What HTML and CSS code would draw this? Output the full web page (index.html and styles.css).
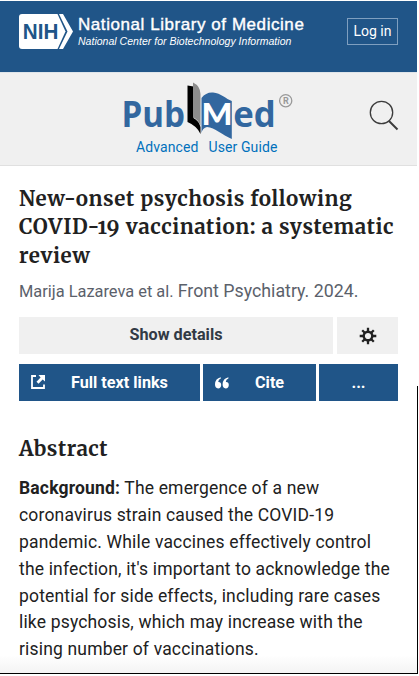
FILE: index.html
```html
<!DOCTYPE html>
<html lang="en">
<head>
    <meta charset="UTF-8">
    <meta name="viewport" content="width=device-width, initial-scale=1.0">
    <title>New-onset psychosis following COVID-19 vaccination - PubMed</title>
    <link rel="stylesheet" href="styles.css">
</head>
<body>
    <div class="page">
        <header class="ncbi-header">
            <a class="ncbi-logo" href="#">
                <svg class="nih-mark" width="54" height="35" viewBox="0 0 54 35">
                    <path d="M3 0H38.5L46.5 17.5L38.5 35H3Q0 35 0 32V3Q0 0 3 0Z" fill="#fff"/>
                    <path d="M40 0H44L54 17.5L44 35H40L48.5 17.5Z" fill="#fff"/>
                    <text class="nih-text" x="3.8" y="25" textLength="35.5" lengthAdjust="spacingAndGlyphs">NIH</text>
                </svg>
                <span class="ncbi-names">
                    <span class="nlm">National Library of Medicine</span>
                    <span class="ncbi">National Center for Biotechnology Information</span>
                </span>
            </a>
            <button class="login">Log in</button>
        </header>

        <div class="search-bar">
            <div class="brand">
                <svg class="pubmed-logo" width="172" height="58" viewBox="0 0 172 58">
                    <text class="pm-text" x="-1.500" y="45" textLength="63.500" lengthAdjust="spacingAndGlyphs">Pub</text>
                    <path d="M64.500 3.500L70.500 4.500V36Q76 39 77.500 45V52Q74 44 64.500 40Z" fill="#000"/>
                    <path d="M70 0.500Q77.300 4 77.500 12V44Q75.500 38 70 35Z" fill="#8c8c8c"/>
                    <path d="M78.500 16Q83 10 90 10.500C98 11 103 17 108.800 19V57C99 53 92 45.500 84 45Q79.500 46 78.500 51Z" fill="#32679f"/>
                    <text class="pm-text pm-white" x="78.500" y="42.500" textLength="31" lengthAdjust="spacingAndGlyphs">M</text>
                    <text class="pm-text" x="110.300" y="45" textLength="42.500" lengthAdjust="spacingAndGlyphs">ed</text>
                    <circle cx="162.700" cy="18.700" r="6.100" fill="none" stroke="#999" stroke-width="1.300"/>
                    <text class="reg" x="162.900" y="22" text-anchor="middle">R</text>
                </svg>
                <nav class="brand-links">
                    <a href="#">Advanced</a>
                    <a href="#">User Guide</a>
                </nav>
            </div>
            <button class="search-button" aria-label="Search">
                <svg width="30" height="31" viewBox="0 0 30 31" fill="none" stroke="#3c3c3c">
                    <circle cx="12.500" cy="12.500" r="11.200" stroke-width="1.300"/>
                    <path d="M20 21L28.500 29.500" stroke-width="2"/>
                </svg>
            </button>
        </div>

        <main class="article">
            <h1 class="title">
                New-onset psychosis following<br>
                COVID-19 vaccination: a systematic<br>
                review
            </h1>
            <p class="citation"><span class="authors">Marija Lazareva et al.</span> <span class="journal">Front Psychiatry. 2024.</span></p>

            <div class="details-row">
                <button class="gray-button">Show details</button>
                <button class="gray-button" aria-label="Settings">
                    <svg class="gear" width="18" height="18" viewBox="-9 -9 18 18" stroke="#212121">
                        <circle r="4.300" fill="none" stroke-width="2.400"/>
                        <path d="M0-5V-8.300M0 5V8.300M-5 0H-8.300M5 0H8.300M-3.500-3.500L-5.800-5.800M3.500-3.500L5.800-5.800M-3.500 3.500L-5.800 5.800M3.500 3.500L5.800 5.800" stroke-width="2.300"/>
                    </svg>
                </button>
            </div>

            <div class="actions-row">
                <button class="blue-button full-text">
                    <svg class="link-icon" width="14" height="14" viewBox="0 0 14 14">
                        <path d="M5 1H1V13H13V9.500" fill="none" stroke="#fff" stroke-width="1.800"/>
                        <path d="M7.500 0H14V6.500L11.700 4.500L7.500 8.700L5.500 6.700L9.600 2.400Z" fill="#fff"/>
                    </svg>
                    <span>Full text links</span>
                </button>
                <button class="blue-button cite">
                    <svg class="quote-icon" width="14" height="12" viewBox="0 0 14 12" fill="#fff">
                        <path id="quote" d="M5.800 0.200V1.600Q3.400 2.500 3.200 5Q6.200 4.800 6.200 8Q6 11.400 3.100 11.400Q0 11.200 0 7.200Q0.300 1.400 5.800 0.200Z"/>
                        <use href="#quote" x="7.600"/>
                    </svg>
                    <span>Cite</span>
                </button>
                <button class="blue-button more">...</button>
            </div>

            <h2 class="abstract-title">Abstract</h2>
            <p class="abstract">
                <strong>Background:</strong> The emergence of a new<br>
                coronavirus strain caused the COVID-19<br>
                pandemic. While vaccines effectively control<br>
                the infection, it's important to acknowledge the<br>
                potential for side effects, including rare cases<br>
                like psychosis, which may increase with the<br>
                rising number of vaccinations.
            </p>
        </main>
        <div class="edge"></div>
    </div>
</body>
</html>
```

FILE: styles.css
```css
* {
    box-sizing: border-box;
}

body {
    margin: 0;
    background-color: #fff;
    font-family: Roboto, sans-serif;
    color: #212121;
}

button {
    border: none;
    padding: 0;
    font-family: inherit;
    cursor: pointer;
}

a {
    text-decoration: none;
}

.page {
    position: relative;
    width: 418px;
    height: 674px;
    padding: 1px 1px 0 0;
    border-bottom: 1px solid #000;
    overflow: hidden;
    background: linear-gradient(#fff 655px, #f3f3f3 674px);
}

/* thin line down the right side */
.edge {
    position: absolute;
    right: 0;
    top: 386px;
    bottom: 0;
    width: 1px;
    background-color: #000;
}

/* NCBI header */
.ncbi-header {
    display: flex;
    justify-content: space-between;
    align-items: flex-start;
    height: 71px;
    padding: 13px 19px 0 19px;
    background-color: #205588;
}

.ncbi-logo {
    display: flex;
    gap: 5px;
    color: #fff;
    font-family: "Liberation Sans", Arial, sans-serif;
    white-space: nowrap;
}

.nih-text {
    font-size: 21.5px;
    font-weight: 700;
    fill: #205588;
}

.ncbi-names {
    display: flex;
    flex-direction: column;
}

.nlm {
    margin-top: 1px;
    font-size: 17px;
    line-height: 20px;
    letter-spacing: 0.56px;
    -webkit-text-stroke: 0.4px #fff;
}

.ncbi {
    font-size: 10.5px;
    font-style: italic;
    line-height: 12px;
    letter-spacing: 0.02px;
}

.login {
    width: 51px;
    height: 27px;
    margin-top: 4px;
    border: 1px solid #7f9fc0;
    background: none;
    color: #fff;
    font-size: 14px;
    line-height: 22px;
    padding-bottom: 2px;
}

/* Logo and search */
.search-bar {
    display: flex;
    justify-content: space-between;
    height: 94px;
    padding: 9px 18px 0 124px;
    background-color: #f0f0f0;
    border-top: 1px solid #dfe5ea;
    border-bottom: 1px solid #e0e0e0;
}

.pubmed-logo {
    display: block;
    margin-left: -1px;
    overflow: visible;
}

.pm-text {
    font-family: "Open Sans", sans-serif;
    font-size: 36px;
    font-weight: 700;
    fill: #32679f;
}

.pm-white {
    font-family: Lato, sans-serif;
    font-size: 31px;
    font-weight: 900;
    fill: #fff;
}

.reg {
    font-size: 9px;
    font-weight: 700;
    fill: #999;
}

.brand-links {
    display: flex;
    gap: 10px;
    margin: -1px 0 0 12px;
    font-size: 14px;
    line-height: 17px;
    letter-spacing: 0.1px;
    white-space: nowrap;
}

.brand-links a {
    color: #0071bc;
}

.search-button {
    align-self: flex-start;
    height: 31px;
    margin-top: 18px;
    background: none;
}

/* Article */
.article {
    padding: 19px 19px 0;
}

.title {
    margin: 0;
    font-family: Merriweather, "DejaVu Serif Condensed", "DejaVu Serif", serif;
    font-size: 20.5px;
    font-weight: 700;
    font-variant-numeric: oldstyle-nums;
    line-height: 28.3px;
    letter-spacing: 0.58px;
    white-space: nowrap;
}

.citation {
    margin: 11px 0 0;
    font-size: 16.4px;
    line-height: 20px;
    color: #5b616b;
    white-space: nowrap;
}

.journal {
    font-size: 17.8px;
}

.details-row {
    display: grid;
    grid-template-columns: 314px 61px;
    gap: 4px;
    height: 37px;
    margin-top: 15px;
}

.gray-button {
    display: flex;
    justify-content: center;
    align-items: center;
    padding-bottom: 2px;
    background-color: #f0f0f0;
    color: #323a45;
    font-size: 16.2px;
    font-weight: 700;
}

.gear {
    margin-top: 4px;
}

.actions-row {
    display: grid;
    grid-template-columns: 181px 113px 79px;
    gap: 3px;
    height: 37px;
    margin-top: 10px;
}

.blue-button {
    display: flex;
    align-items: center;
    background-color: #205588;
    color: #fff;
    font-size: 16.2px;
    font-weight: 700;
}

.full-text {
    gap: 26px;
    padding-left: 12px;
}

.cite {
    gap: 26px;
    padding-left: 12px;
}

.quote-icon {
    margin-top: 2px;
}

.more {
    justify-content: center;
}

.abstract-title {
    margin: 33px 0 0;
    font-family: Merriweather, "DejaVu Serif Condensed", "DejaVu Serif", serif;
    font-size: 20.5px;
    font-weight: 700;
    line-height: 30px;
    letter-spacing: 0.45px;
}

.abstract {
    margin: 11px 0 0;
    font-size: 17.5px;
    line-height: 26.9px;
    letter-spacing: 0.17px;
    white-space: nowrap;
}
```
